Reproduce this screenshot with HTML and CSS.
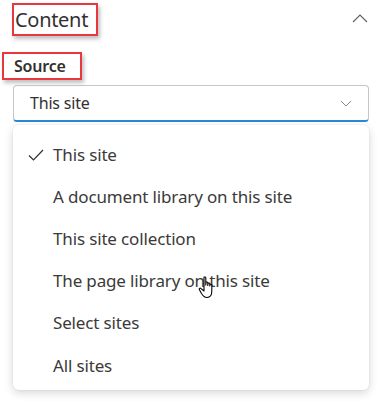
FILE: index.html
```html
<!DOCTYPE html>
<html>
<head>
<meta charset="utf-8">
<link rel="stylesheet" href="styles.css">
</head>
<body>
<div class="panel">
  <div class="header">
    <div class="hl hl-title"><span class="title">Content</span></div>
    <svg class="chev-up" width="16" height="9" viewBox="0 0 16 9"><path d="M1 8 L8 1 L15 8" fill="none" stroke="#605e5c" stroke-width="1.1"/></svg>
  </div>
  <div class="label-row">
    <div class="hl hl-label"><span class="label">Source</span></div>
  </div>
  <div class="select">
    <span class="select-text">This site</span>
    <svg class="chev-down" width="12" height="7" viewBox="0 0 12 7"><path d="M1 1 L6 6 L11 1" fill="none" stroke="#8a8886" stroke-width="1"/></svg>
  </div>
  <div class="menu">
    <div class="item"><svg class="check" width="16" height="12" viewBox="0 0 16 12"><path d="M1 6.5 L5.5 11 L15 1" fill="none" stroke="#323130" stroke-width="1.2"/></svg><span>This site</span></div>
    <div class="item"><span>A document library on this site</span></div>
    <div class="item"><span>This site collection</span></div>
    <div class="item"><span>The page library on this site</span></div>
    <div class="item"><span>Select sites</span></div>
    <div class="item"><span>All sites</span></div>
  </div>
  <svg class="cursor" width="20" height="24" viewBox="0 0 20 24"><path d="M6 1.5 C6 0.8 7.8 0.8 7.8 1.5 L7.8 9 L8 6.5 C8 5.8 9.8 5.8 9.8 6.5 L9.8 9.5 L10 7.5 C10 6.8 11.8 6.8 11.8 7.5 L11.8 10 L12 8.8 C12 8.1 13.8 8.1 13.8 8.8 L13.8 15 C13.8 19 12 21.5 9 21.5 C6.5 21.5 5 20 3.5 17.5 L1.3 13.5 C0.8 12.6 2 11.6 2.8 12.4 L6 15 Z" fill="#fff" stroke="#000" stroke-width="1.1" stroke-linejoin="round"/></svg>
</div>
</body>
</html>
```
FILE: styles.css
```css
html, body {
  margin: 0;
  padding: 0;
  background: #ffffff;
}
body {
  font-family: "Noto Sans", "Open Sans", sans-serif;
  color: #323130;
}
.panel {
  position: relative;
  width: 383px;
  height: 402px;
  overflow: hidden;
}
.header {
  display: flex;
  justify-content: space-between;
  align-items: flex-start;
  padding: 3px 15px 0 12px;
  height: 52px;
  box-sizing: border-box;
}
.hl {
  border: 2px solid #e8373f;
  box-shadow: 2px 3px 4px rgba(0,0,0,0.25);
  box-sizing: border-box;
}
.hl-title {
  width: 86px;
  height: 33px;
  padding-left: 1px;
  display: flex;
  align-items: center;
}
.title {
  font-size: 20px;
  line-height: 1;
  letter-spacing: -0.3px;
}
.chev-up {
  margin-top: 11px;
}
.label-row {
  padding-left: 2px;
  height: 33px;
}
.hl-label {
  width: 80px;
  height: 28px;
  padding-left: 10px;
  display: flex;
  align-items: center;
}
.label {
  font-size: 16px;
  font-weight: 600;
  letter-spacing: -0.2px;
}
.select {
  margin-left: 13px;
  width: 356px;
  height: 37px;
  box-sizing: border-box;
  border: 1px solid #c8c6c4;
  border-bottom: 2px solid #2b88d8;
  border-radius: 4px;
  display: flex;
  align-items: center;
  justify-content: space-between;
  padding: 0 16px 0 16px;
}
.select-text {
  font-size: 16px;
  letter-spacing: -0.2px;
}
.menu {
  margin-left: 13px;
  margin-top: 3px;
  width: 356px;
  height: 265px;
  box-sizing: border-box;
  border-radius: 6px;
  background: #fff;
  box-shadow: 0 3px 10px rgba(0,0,0,0.16), 0 0 2px rgba(0,0,0,0.08);
  padding: 8px 0 0 0;
}
.item {
  height: 42.2px;
  display: flex;
  align-items: center;
  padding-left: 40px;
  position: relative;
  font-size: 17px;
  letter-spacing: -0.15px;
  color: #3b3a39;
}
.check {
  position: absolute;
  left: 15px;
  top: 16px;
}
.cursor {
  position: absolute;
  left: 198px;
  top: 276px;
}
```
